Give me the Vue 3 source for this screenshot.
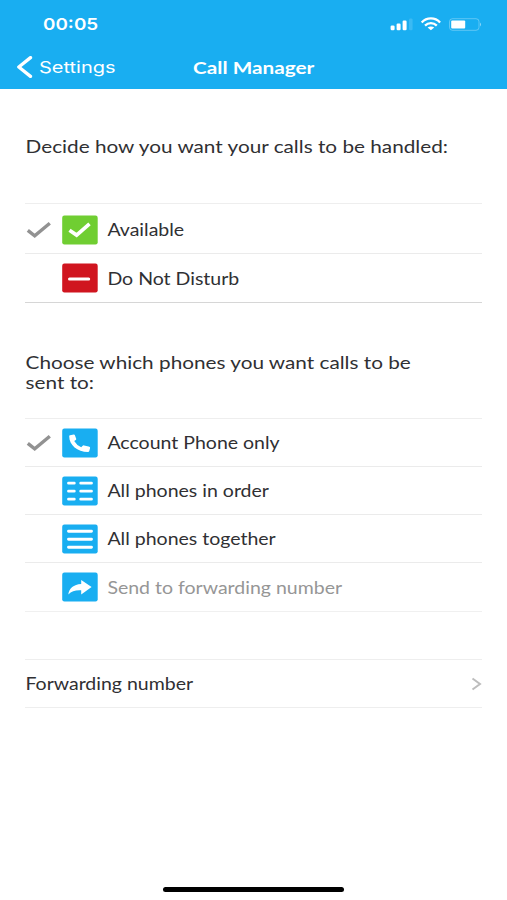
<script setup>
const handling = [
  { icon: 'available', label: 'Available', selected: true },
  { icon: 'dnd', label: 'Do Not Disturb' },
]
const phones = [
  { icon: 'phone', label: 'Account Phone only', selected: true },
  { icon: 'order', label: 'All phones in order' },
  { icon: 'together', label: 'All phones together' },
  { icon: 'forward', label: 'Send to forwarding number', muted: true },
]
const groups = [
  { name: 'handling', lines: ['Decide how you want your calls to be handled:'], rows: handling },
  { name: 'phones', lines: ['Choose which phones you want calls to be', 'sent to:'], rows: phones },
]
</script>

<template>
  <div class="screen">
    <header class="header">
      <div class="status">
        <span class="time wide">00:05</span>
        <svg class="indicators" width="92" height="18" viewBox="0 0 92 18">
          <g fill="#fff">
            <rect x=".6" y="10.5" width="4" height="4.700" rx="1.300" />
            <rect x="6.600" y="8.500" width="4" height="6.700" rx="1.200" />
            <rect x="12.600" y="5.600" width="4" height="9.600" rx="1.200" />
            <rect x="19" y="3.500" width="3.600" height="11.700" rx="1.200" opacity=".15" />
          </g>
          <g fill="none" stroke="#fff" stroke-width="2.300">
            <path d="M31.700 7.500C36.700 2.100 45.100 2.100 50.100 7.500" />
            <path d="M35 10.600C38.400 7.200 43.400 7.200 46.800 10.600" />
          </g>
          <path d="M37.600 12.600C39.400 11 42.400 11 44.200 12.600L40.900 15.200Z" fill="#fff" />
          <rect x="59.500" y="3.700" width="29.500" height="11.600" rx="3" fill="none" stroke="#fff" stroke-opacity=".3" />
          <rect x="61.200" y="5.400" width="14" height="8.200" rx="1" fill="#fff" />
          <path d="M90 7.500Q92 9.500 90 11.500Z" fill="#fff" opacity=".5" />
        </svg>
      </div>
      <nav class="nav">
        <div class="back">
          <svg width="17" height="22" viewBox="0 0 17 22">
            <path d="M14.500 1.600L2.800 11L14.500 20.400" fill="none" stroke="#fff" stroke-width="3.300" stroke-linecap="round" stroke-linejoin="round" />
          </svg>
          <span class="back-label wide">Settings</span>
        </div>
        <span class="title wide">Call Manager</span>
      </nav>
    </header>

    <main class="content">
      <section v-for="g in groups" :key="g.name" :class="g.name">
        <h2 class="prompt">
          <span v-for="l in g.lines" :key="l" class="line wide">{{ l }}</span>
        </h2>
        <ul class="list">
          <li v-for="r in g.rows" :key="r.label" class="row" :class="{ muted: r.muted }">
            <span class="tick">
              <svg v-if="r.selected" width="26" height="18" viewBox="0 0 26 18">
                <path d="M2.800 9.400L9.700 14.900L24.800 2.200" fill="none" stroke="#929292" stroke-width="3.400" />
              </svg>
            </span>
            <svg class="icon" :class="r.icon" width="36" height="30" viewBox="0 0 36 30">
              <rect class="tile" x=".2" y=".5" width="35.500" height="29" rx="2.200" />
              <path v-if="r.icon === 'available'" d="M7.500 15.300L14.600 20.100L27.500 8.800" fill="none" stroke="#fff" stroke-width="3.700" />
              <path v-else-if="r.icon === 'dnd'" d="M7.500 16H26.700" stroke="#fff" stroke-width="3" stroke-linecap="round" />
              <path v-else-if="r.icon === 'phone'" d="M8 7.300L11.800 6.500Q12.600 6.400 12.900 7.200L14.200 10.800Q14.400 11.500 13.800 11.900L12.200 13.100Q14.400 17.200 19.200 19.200L20.700 17.700Q21.200 17.100 22 17.400L26.600 18.600Q28.400 19 28.100 20.100L27.300 23Q27 23.900 26 23.900C15.300 23.900 7.200 17 7.200 8.200Q7.200 7.500 8 7.300Z" fill="#fff" />
              <path v-else-if="r.icon === 'order'" d="M6.500 7.200H12.300M18.700 7.200H29.500M6.500 15.200H12.300M18.700 15.200H29.500M6.500 23.200H12.300M18.700 23.200H29.500" stroke="#fff" stroke-width="2.800" stroke-linecap="round" />
              <path v-else-if="r.icon === 'together'" d="M6.500 7.200H29.500M6.500 15.200H29.500M6.500 23.200H29.500" stroke="#fff" stroke-width="2.900" stroke-linecap="round" />
              <path v-else d="M19.200 8L29.600 15.100L19.200 22.500V18.300C13.500 18 9.700 19 6.300 22.500C7.200 16.300 11.500 12.500 19.200 12Z" fill="#fff" />
            </svg>
            <span class="label wide">{{ r.label }}</span>
          </li>
        </ul>
      </section>

      <div class="forwarding">
        <span class="label wide">Forwarding number</span>
        <svg width="11" height="14" viewBox="0 0 11 14">
          <path d="M1.500 1.500L9 7L1.500 12.500" fill="none" stroke="#bdbdbd" stroke-width="2" />
        </svg>
      </div>
    </main>

    <div class="home"></div>
  </div>
</template>

<style>
body { margin: 0; background: #fff; }
</style>

<style scoped>
.screen {
  display: flex;
  flex-direction: column;
  box-sizing: border-box;
  width: 507px;
  height: 900px;
  overflow: hidden;
  background: #fff;
  color: #303033;
  font-family: Lato, sans-serif;
  font-size: 17px;
}
.wide {
  display: block;
  white-space: nowrap;
  transform: scaleX(1.22);
  transform-origin: left center;
}
.header {
  box-sizing: border-box;
  height: 89px;
  padding-top: 12px;
  background: #19aef1;
  color: #fff;
}
.status {
  display: flex;
  justify-content: space-between;
  align-items: center;
  height: 24px;
  padding: 0 25px 0 43px;
}
.time {
  font-family: Inter, sans-serif;
  font-weight: 600;
  font-size: 16.400px;
  transform: scaleX(1.15);
}
.indicators { margin-top: -1px; }
.nav {
  display: grid;
  grid-template-columns: 1fr auto 1fr;
  align-items: center;
  height: 40px;
  margin-top: 11px;
  padding: 0 15px;
}
.back { display: flex; align-items: center; gap: 6px; margin-top: -1px; padding-left: 1px; }
.back-label { font-family: Inter, sans-serif; font-size: 16.400px; }
.nav .title { font-weight: 700; transform-origin: center; }
.content { padding: 0 25px; }
.prompt { margin: 0; font-size: inherit; font-weight: 400; }
.line { height: 20px; line-height: 20px; padding-left: .5px; }
.handling .prompt { height: 66px; padding-top: 48px; }
.phones .prompt { height: 65px; padding-top: 50px; }
.list { margin: 0; padding: 0; list-style: none; border-top: 1px solid #eee; }
.row {
  display: flex;
  align-items: center;
  box-sizing: border-box;
  height: 48px;
  border-bottom: 1px solid #ebebeb;
}
.handling .row:first-child { height: 50px; padding-top: 2px; }
.handling .row:last-child { height: 49px; border-color: #d6d6d6; }
.phones .row:last-child { height: 49px; border-color: #f0f0f0; }
.tick { width: 36.500px; height: 18px; }
.icon { margin-right: 9.500px; }
.label { font-size: 16.400px; transform: translate(.4px, .4px) scaleX(1.19); }
.tile { fill: #19aef1; }
.available .tile { fill: #70ce32; }
.dnd .tile { fill: #d0151f; }
.muted { color: #969696; }
.forwarding {
  display: flex;
  justify-content: space-between;
  align-items: center;
  box-sizing: border-box;
  height: 49px;
  margin-top: 47px;
  border: solid #eee;
  border-width: 1px 0;
}
.home {
  width: 181px;
  height: 5px;
  margin: auto auto 8px 163px;
  border-radius: 3px;
  background: #000;
}
</style>
